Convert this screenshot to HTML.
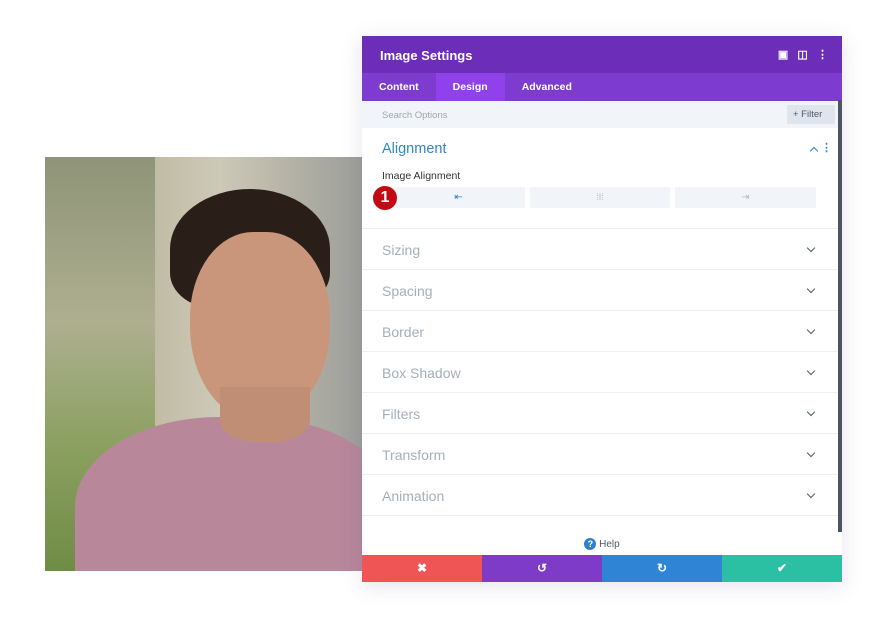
<!DOCTYPE html>
<html><head><meta charset="utf-8"><style>
*{box-sizing:border-box;margin:0;padding:0}
body{width:880px;height:621px;background:#fff;font-family:"Liberation Sans",sans-serif;position:relative;overflow:hidden}
.photo{position:absolute;left:45px;top:157px;width:317px;height:414px;overflow:hidden;background:linear-gradient(90deg,#9a9f84 0%,#bdb9a0 30%,#cdc9b8 55%,#b2b0a4 80%,#9c9e9a 100%)}
.panel{position:absolute;left:362px;top:36px;width:480px;height:546px;background:#fff;box-shadow:0 4px 20px rgba(80,80,140,.15)}
.hdr{height:37px;background:#6c2eb9;color:#fff;font-weight:bold;font-size:13px;padding:12px 18px}
.tabs{height:28px;background:#7e3bd0;display:flex;font-size:10.5px;font-weight:bold;color:#fff}
.tabs div{padding:8px 17px}
.tabs .on{background:#8f42ec}
.search{height:27px;background:#f1f5f9;position:relative;font-size:9.5px;color:#9aa6b4;padding:9px 20px}
.filter{position:absolute;right:7px;top:4px;height:19px;width:48px;background:#dfe5ec;color:#4d5a67;font-size:9.5px;padding:4px 6px;border-radius:2px}
.row{height:41px;border-bottom:1px solid #edf0f3;position:relative;font-size:14px;color:#a6afb9;padding:13px 20px}
.chev{position:absolute;right:28px;top:16px;width:6px;height:6px;border-right:1.6px solid #4d5a67;border-bottom:1.6px solid #4d5a67;transform:rotate(45deg)}
.btn{position:absolute;top:151px;height:21px;background:#f1f5f9}
.foot{position:absolute;left:0;bottom:0;width:480px;height:27px;display:flex}
.foot div{flex:1;color:#fff;font-weight:bold;font-size:12px;text-align:center;line-height:27px}
</style></head><body>
<div class="photo">
<div style="position:absolute;left:0;top:0;width:110px;height:414px;background:linear-gradient(180deg,#8f9478,#aeaf90 40%,#8ba060 70%,#6f8c45)"></div>
<div style="position:absolute;left:125px;top:32px;width:160px;height:120px;background:#2a1e19;border-radius:50% 50% 30% 30%"></div>
<div style="position:absolute;left:145px;top:75px;width:140px;height:190px;background:#c9967c;border-radius:45% 45% 50% 50%"></div>
<div style="position:absolute;left:180px;top:240px;width:80px;height:60px;background:#c08e74"></div>
<div style="position:absolute;left:30px;top:260px;width:320px;height:200px;background:#b8879a;border-radius:45% 45% 0 0"></div>
<div style="position:absolute;left:175px;top:230px;width:90px;height:55px;background:#c08e74;border-radius:0 0 40% 40%"></div>
</div>
<div class="panel">
<div class="hdr">Image Settings<span style="position:absolute;right:14px;top:12px;font-size:11px">▣&nbsp;&nbsp;&nbsp;◫&nbsp;&nbsp;&nbsp;⋮</span></div>
<div class="tabs"><div>Content</div><div class="on">Design</div><div>Advanced</div></div>
<div class="search">Search Options<div class="filter">+ Filter</div></div>
<div style="height:101px;border-bottom:1px solid #edf0f3;position:relative">
<div style="position:absolute;left:20px;top:13px;font-size:14.5px;color:#2f87c7">Alignment</div>
<div style="position:absolute;right:25px;top:20px;width:6px;height:6px;border-left:1.6px solid #2f87c7;border-top:1.6px solid #2f87c7;transform:rotate(45deg)"></div>
<div style="position:absolute;right:10px;top:13px;color:#2f87c7;font-size:11px;font-weight:bold">⋮</div>
<div style="position:absolute;left:20px;top:42px;font-size:10.5px;color:#333">Image Alignment</div>
</div>
<div class="btn" style="left:30px;width:133px;color:#2f87c7;font-size:10px;text-align:center;line-height:21px">⇤</div>
<div class="btn" style="left:168px;width:140px;color:#bbb;font-size:9px;text-align:center;line-height:21px">⁞I⁞</div>
<div class="btn" style="left:313px;width:141px;color:#bbb;font-size:10px;text-align:center;line-height:21px">⇥</div>
<div style="position:absolute;left:11px;top:150px;width:24px;height:24px;border-radius:50%;background:#c30a12;color:#fff;font-weight:bold;font-size:16px;text-align:center;line-height:24px">1</div>
<div class="row">Sizing<span class="chev"></span></div>
<div class="row">Spacing<span class="chev"></span></div>
<div class="row">Border<span class="chev"></span></div>
<div class="row">Box Shadow<span class="chev"></span></div>
<div class="row">Filters<span class="chev"></span></div>
<div class="row">Transform<span class="chev"></span></div>
<div class="row">Animation<span class="chev"></span></div>
<div style="position:absolute;left:0;top:502px;width:480px;text-align:center;font-size:10px;color:#4d5a67"><span style="display:inline-block;width:12px;height:12px;border-radius:50%;background:#2f7fd0;color:#fff;font-size:9px;line-height:12px;font-weight:bold">?</span> Help</div>
<div style="position:absolute;right:0;top:64px;width:4px;height:432px;background:#4d5560"></div>
<div class="foot"><div style="background:#ef5555">✖</div><div style="background:#7e3bc8">↺</div><div style="background:#2f84d6">↻</div><div style="background:#2bc0a4">✔</div></div>
</div>
</body></html>
